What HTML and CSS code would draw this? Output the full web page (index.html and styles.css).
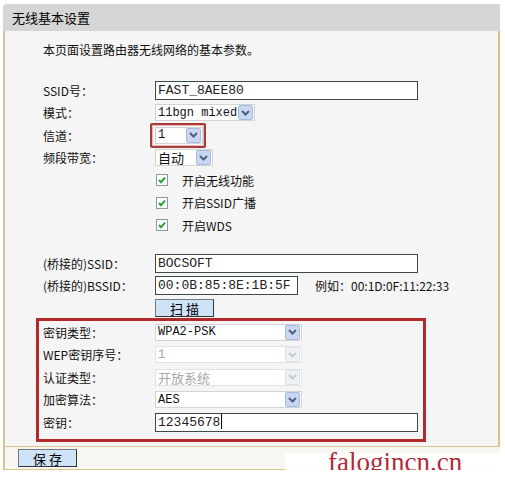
FILE: index.html
```html
<!DOCTYPE html>
<html lang="zh-CN">
<head>
    <meta charset="UTF-8">
    <title>无线基本设置</title>
    <link rel="stylesheet" href="styles.css">
</head>
<body>
    <div class="panel">
        <div class="panel-title">无线基本设置</div>

        <div class="panel-body">
            <div class="intro">本页面设置路由器无线网络的基本参数。</div>

            <!-- basic settings -->
            <div class="row">
                <span class="label">SSID号：</span>
                <span class="input w-long">FAST_8AEE80</span>
            </div>
            <div class="row">
                <span class="label">模式：</span>
                <span class="select w-mode"><span class="select-text">11bgn mixed</span><span class="arrow"><svg width="9" height="6" viewBox="0 0 9 6"><path d="M1 1 L4.5 4.5 L8 1" fill="none" stroke="#4d6185" stroke-width="2"/></svg></span></span>
            </div>
            <div class="row">
                <span class="label">信道：</span>
                <span class="mark">
                    <span class="select w-channel"><span class="select-text">1</span><span class="arrow"><svg width="9" height="6" viewBox="0 0 9 6"><path d="M1 1 L4.5 4.5 L8 1" fill="none" stroke="#4d6185" stroke-width="2"/></svg></span></span>
                </span>
            </div>
            <div class="row">
                <span class="label">频段带宽：</span>
                <span class="select w-band"><span class="select-text cjk">自动</span><span class="arrow"><svg width="9" height="6" viewBox="0 0 9 6"><path d="M1 1 L4.5 4.5 L8 1" fill="none" stroke="#4d6185" stroke-width="2"/></svg></span></span>
            </div>
            <div class="row">
                <span class="label"></span>
                <span class="check"><svg width="12" height="12" viewBox="0 0 12 12"><rect x="0.5" y="0.5" width="11" height="11" fill="#fff" stroke="#8c9aa8"/><path d="M3 6 L5 8.2 L9 3.6" fill="none" stroke="#2e9e3a" stroke-width="2"/></svg></span>
                <span class="check-text">开启无线功能</span>
            </div>
            <div class="row">
                <span class="label"></span>
                <span class="check"><svg width="12" height="12" viewBox="0 0 12 12"><rect x="0.5" y="0.5" width="11" height="11" fill="#fff" stroke="#8c9aa8"/><path d="M3 6 L5 8.2 L9 3.6" fill="none" stroke="#2e9e3a" stroke-width="2"/></svg></span>
                <span class="check-text">开启SSID广播</span>
            </div>
            <div class="row">
                <span class="label"></span>
                <span class="check"><svg width="12" height="12" viewBox="0 0 12 12"><rect x="0.5" y="0.5" width="11" height="11" fill="#fff" stroke="#8c9aa8"/><path d="M3 6 L5 8.2 L9 3.6" fill="none" stroke="#2e9e3a" stroke-width="2"/></svg></span>
                <span class="check-text">开启WDS</span>
            </div>

            <!-- WDS bridge -->
            <div class="spacer"></div>
            <div class="row">
                <span class="label">(桥接的)SSID：</span>
                <span class="input w-long">BOCSOFT</span>
            </div>
            <div class="row">
                <span class="label">(桥接的)BSSID：</span>
                <span class="input w-mac">00:0B:85:8E:1B:5F</span>
                <span class="hint">例如：00:1D:0F:11:22:33</span>
            </div>
            <div class="row">
                <span class="label"></span>
                <button class="btn btn-scan">扫 描</button>
            </div>

            <!-- security -->
            <div class="security">
                <div class="row">
                    <span class="label">密钥类型：</span>
                    <span class="select w-sec"><span class="select-text">WPA2-PSK</span><span class="arrow"><svg width="9" height="6" viewBox="0 0 9 6"><path d="M1 1 L4.5 4.5 L8 1" fill="none" stroke="#4d6185" stroke-width="2"/></svg></span></span>
                </div>
                <div class="row">
                    <span class="label">WEP密钥序号：</span>
                    <span class="select w-sec disabled"><span class="select-text">1</span><span class="arrow"><svg width="9" height="6" viewBox="0 0 9 6"><path d="M1 1 L4.5 4.5 L8 1" fill="none" stroke="#c3c9d2" stroke-width="2"/></svg></span></span>
                </div>
                <div class="row">
                    <span class="label">认证类型：</span>
                    <span class="select w-sec disabled"><span class="select-text cjk">开放系统</span><span class="arrow"><svg width="9" height="6" viewBox="0 0 9 6"><path d="M1 1 L4.5 4.5 L8 1" fill="none" stroke="#c3c9d2" stroke-width="2"/></svg></span></span>
                </div>
                <div class="row">
                    <span class="label">加密算法：</span>
                    <span class="select w-sec"><span class="select-text">AES</span><span class="arrow"><svg width="9" height="6" viewBox="0 0 9 6"><path d="M1 1 L4.5 4.5 L8 1" fill="none" stroke="#4d6185" stroke-width="2"/></svg></span></span>
                </div>
                <div class="row">
                    <span class="label">密钥：</span>
                    <span class="input w-long">12345678<span class="caret"></span></span>
                </div>
            </div>
        </div>

        <div class="panel-foot">
            <button class="btn btn-save">保 存</button>
        </div>

        <div class="watermark">falogincn.cn</div>
    </div>
</body>
</html>
```

FILE: styles.css
```css
body {
    margin: 0;
    background-color: #fff;
    font-family: "Noto Sans CJK SC", "DejaVu Sans", sans-serif;
    font-size: 12px;
    color: #111;
}
.panel {
    position: relative;
    width: 497px;
    margin: 4px 0 0 3px;
}
.panel-title {
    height: 27px;
    line-height: 27px;
    padding-left: 9px;
    background-color: #d6d6d6;
    border-radius: 3px 0 0 0;
    font-size: 13px;
    color: #000;
}
.panel-body {
    background-color: #f5f5f5;
    border-left: 2px solid #d8c48f;
    border-right: 2px solid #d8c48f;
    border-bottom: 1px solid #d8c48f;
    padding: 8px 0 4.5px 38px;
}
.intro {
    height: 22px;
    line-height: 22px;
    margin-bottom: 18px;
}
.row {
    display: flex;
    align-items: center;
    height: 22.5px;
}
.label {
    width: 112px;
    flex-shrink: 0;
}
.spacer {
    height: 15.5px;
}
/* text boxes */
.input {
    box-sizing: border-box;
    height: 19px;
    line-height: 17px;
    padding-left: 2px;
    background-color: #fff;
    border: 1px solid #3c4a46;
    font-family: "Liberation Mono", monospace;
    font-size: 13px;
    color: #222;
}
.w-long { width: 263px; }
.w-mac { width: 143px; }
.caret {
    display: inline-block;
    width: 1px;
    height: 15px;
    margin-left: 1px;
    vertical-align: top;
    background-color: #000;
}
.hint {
    margin-left: 17px;
    font-size: 12px;
}
/* drop downs */
.select {
    box-sizing: border-box;
    display: flex;
    align-items: center;
    justify-content: space-between;
    height: 17px;
    padding: 0 1px 0 2px;
    background-color: #fff;
    border: 1px solid #d4d4d4;
    font-family: "Liberation Mono", monospace;
    font-size: 12px;
    color: #111;
}
.select-text.cjk {
    font-family: "Noto Sans CJK SC", sans-serif;
    font-size: 13px;
}
.arrow {
    box-sizing: border-box;
    display: flex;
    align-items: center;
    justify-content: center;
    width: 15px;
    height: 15px;
    background-color: #c9d7f0;
    border: 1px solid #a5bade;
    border-radius: 2px;
}
.select.disabled {
    color: #a8a8a8;
    border-color: #e2e2e2;
}
.select.disabled .arrow {
    background-color: #eef1f6;
    border-color: #dde3ec;
}
.w-mode { width: 100px; }
.w-channel { width: 48px; }
.w-band { width: 58px; }
.w-sec { width: 147px; }
.mark {
    display: flex;
    margin-left: -5px;
    padding: 2px 1px 2px 3px;
    border: 2px solid #a93a3a;
    border-radius: 2px;
    box-shadow: inset 0 0 0 1px #e9b8b8;
}
/* check boxes */
.check {
    display: flex;
    margin-left: 1px;
}
.check-text {
    margin-left: 14px;
}
/* buttons */
.btn {
    box-sizing: border-box;
    height: 18px;
    padding: 0;
    background-color: #cfe3f8;
    border: 1px solid #333;
    border-top-color: #777;
    border-left-color: #777;
    font-family: "Noto Sans CJK SC", sans-serif;
    font-size: 13px;
    font-weight: normal;
    line-height: 15px;
    color: #000;
}
.btn-scan { width: 59px; }
.btn-save { width: 59px; }
/* key settings block */
.security {
    width: 390px;
    box-sizing: border-box;
    margin: -1.5px 0 0 -7px;
    padding: 0 0 5px 4px;
    border: 3px solid #b22a2a;
}
.panel-foot {
    height: 22px;
    display: flex;
    align-items: center;
    padding-left: 13px;
    background-color: #f8f6f0;
    border-left: 2px solid #d8c48f;
    border-bottom: 1px solid #d8c48f;
}
/* site stamp over the corner */
.watermark {
    position: absolute;
    left: 282px;
    top: 449px;
    width: 215px;
    height: 21px;
    padding-left: 43px;
    box-sizing: border-box;
    background-color: rgba(255, 255, 255, 0.92);
    font-family: "Liberation Serif", serif;
    font-size: 27px;
    line-height: 19px;
    color: #b02a3a;
    white-space: nowrap;
}
```
